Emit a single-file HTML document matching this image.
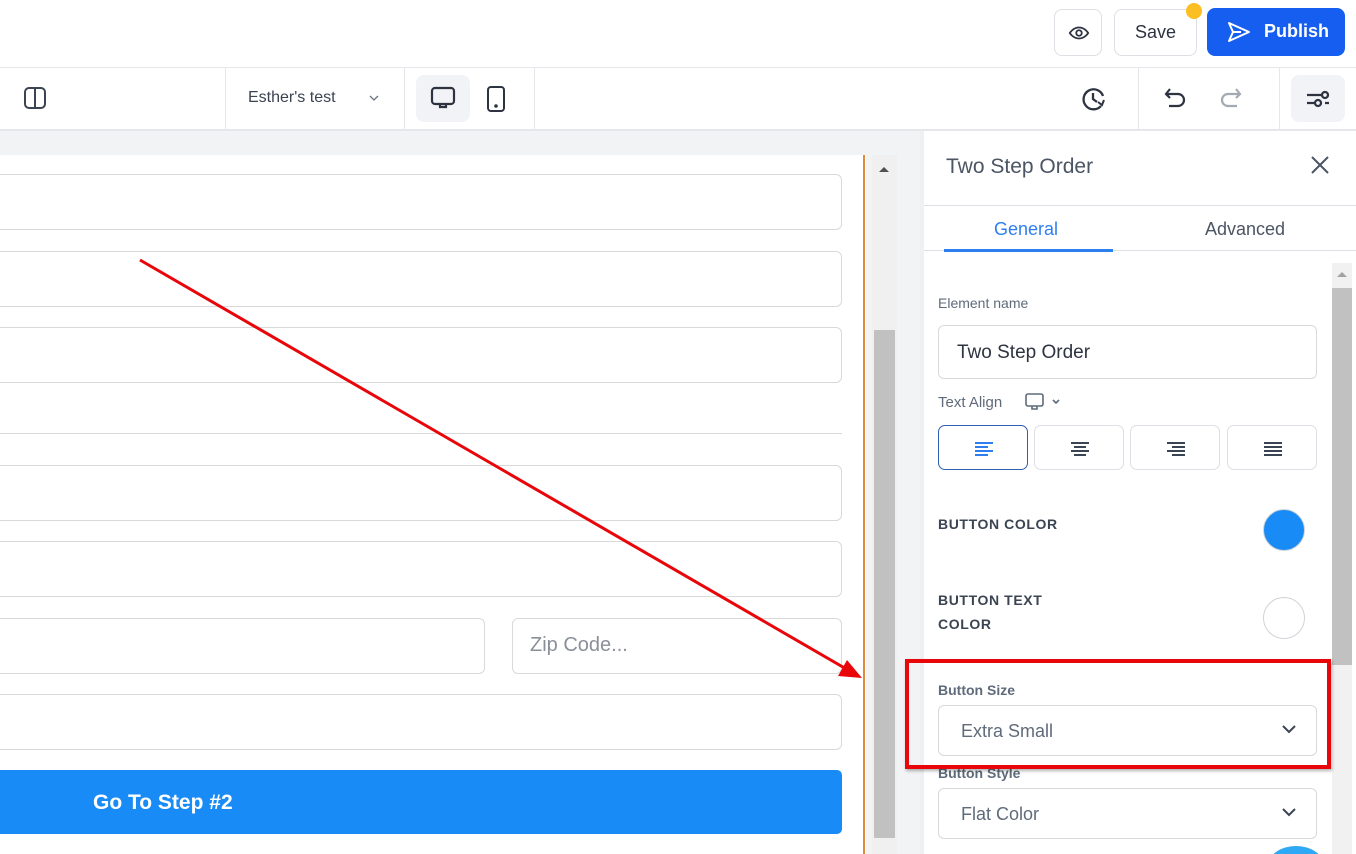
<!DOCTYPE html>
<html style="overflow:hidden;height:854px"><head><meta charset="utf-8"><style>
*{box-sizing:border-box;margin:0;padding:0}
html,body{overflow:hidden}
body{width:1356px;height:854px;overflow:hidden;background:#fff;font-family:"Liberation Sans",sans-serif;position:relative}
.a{position:absolute}
.inp{position:absolute;border:1px solid #d9d9d9;border-radius:6px;background:#fff}
.lbl{position:absolute;font-size:14px;color:#5f6b7a}
.cap{position:absolute;font-size:14px;font-weight:bold;color:#3b4452;letter-spacing:.6px;line-height:24px}
.ab{position:absolute;top:425px;width:90px;height:45px;border:1px solid #dcdfe3;border-radius:7px;background:#fff}
.ab svg{position:absolute;left:36px;top:14px}
</style></head><body>
<div class="a" style="left:0;top:67px;width:1356px;height:1px;background:#e5e7eb"></div>
<div class="a" style="left:1054px;top:9px;width:48px;height:47px;border:1px solid #dcdfe3;border-radius:8px">
<svg class="a" style="left:13px;top:12px" width="22" height="22" viewBox="0 0 24 24" fill="none" stroke="#2d3340" stroke-width="2"><path d="M2 12s3.5-6 10-6 10 6 10 6-3.5 6-10 6S2 12 2 12z"/><circle cx="12" cy="12" r="3"/></svg></div>
<div class="a" style="left:1114px;top:9px;width:83px;height:47px;border:1px solid #dcdfe3;border-radius:8px;font-size:18px;color:#2d3340;text-align:center;line-height:45px">Save</div>
<div class="a" style="left:1186px;top:3px;width:16px;height:16px;border-radius:50%;background:#fbbf24"></div>
<div class="a" style="left:1207px;top:8px;width:138px;height:48px;background:#155eef;border-radius:8px;color:#fff;font-weight:bold;font-size:18px;line-height:46px;padding-left:57px">Publish</div>
<svg class="a" style="left:1226px;top:20px" width="26" height="24" viewBox="0 0 26 24" fill="none" stroke="#fff" stroke-width="2" stroke-linejoin="round"><path d="M3 3l20 9-20 9 4-9z M7 12h8"/></svg>
<div class="a" style="left:0;top:129px;width:1356px;height:2px;background:#e5e7eb"></div>
<svg class="a" style="left:23px;top:86px" width="24" height="24" viewBox="0 0 24 24" fill="none" stroke="#3b4452" stroke-width="2"><rect x="2" y="2" width="20" height="20" rx="4"/><path d="M12 2v20"/></svg>
<div class="a" style="left:225px;top:68px;width:1px;height:61px;background:#e5e7eb"></div>
<div class="a" style="left:248px;top:89px;font-size:16px;color:#3b4452">Esther's test</div>
<svg class="a" style="left:368px;top:92px" width="12" height="12" viewBox="0 0 12 12" fill="none" stroke="#6b7280" stroke-width="1.3"><path d="M2 4l4 4 4-4"/></svg>
<div class="a" style="left:404px;top:68px;width:1px;height:61px;background:#e5e7eb"></div>
<div class="a" style="left:416px;top:75px;width:54px;height:47px;background:#f2f3f6;border-radius:8px"></div>
<svg class="a" style="left:429px;top:85px" width="28" height="26" viewBox="0 0 28 26" fill="none" stroke="#2d3340" stroke-width="2.2"><rect x="3" y="3" width="22" height="16" rx="3"/><path d="M11 19v3h6v-3"/></svg>
<svg class="a" style="left:485px;top:85px" width="22" height="28" viewBox="0 0 22 28" fill="none" stroke="#2d3340" stroke-width="2"><rect x="3" y="2" width="16" height="24" rx="3"/><circle cx="11" cy="21" r="0.8" fill="#2d3340"/></svg>
<div class="a" style="left:534px;top:68px;width:1px;height:61px;background:#e5e7eb"></div>
<svg class="a" style="left:1081px;top:86px" width="28" height="26" viewBox="0 0 28 26" fill="none" stroke="#2d3340" stroke-width="2.3"><path d="M22 10A10 10 0 1 0 20 20"/><path d="M12 7v6l4 3"/><path d="M23 14l-2 5-4-3" stroke-width="2"/></svg>
<div class="a" style="left:1138px;top:68px;width:1px;height:61px;background:#e5e7eb"></div>
<svg class="a" style="left:1163px;top:86px" width="26" height="24" viewBox="0 0 26 24" fill="none" stroke="#2d3340" stroke-width="2.2"><path d="M7 3L3 8l4 4M3 8h12a6 6 0 0 1 0 12H6"/></svg>
<svg class="a" style="left:1217px;top:86px" width="26" height="24" viewBox="0 0 26 24" fill="none" stroke="#a4aab3" stroke-width="2.2"><path d="M19 3l4 5-4 4M23 8H11a6 6 0 0 0 0 12h9"/></svg>
<div class="a" style="left:1279px;top:68px;width:1px;height:61px;background:#e5e7eb"></div>
<div class="a" style="left:1291px;top:75px;width:54px;height:47px;background:#f2f3f6;border-radius:8px"></div>
<svg class="a" style="left:1305px;top:87px" width="26" height="24" viewBox="0 0 26 24" fill="none" stroke="#2d3340" stroke-width="2.3"><path d="M2 8h14M20 16H24M2 16h8"/><circle cx="20" cy="8" r="3"/><circle cx="13" cy="16" r="3"/></svg>
<div class="a" style="left:0;top:131px;width:924px;height:723px;background:#f2f3f5"></div>
<div class="a" style="left:0;top:155px;width:866px;height:699px;background:#fff"></div>
<div class="a" style="left:863px;top:155px;width:2px;height:699px;background:#e08a3c"></div>
<div class="a" style="left:872px;top:155px;width:25px;height:699px;background:#f0f0f0"></div>
<svg class="a" style="left:878px;top:165px" width="12" height="8"><path d="M1 7L6 2l5 5z" fill="#505050"/></svg>
<div class="a" style="left:874px;top:330px;width:21px;height:508px;background:#c1c1c1"></div>
<div class="inp" style="left:-10px;top:174px;width:852px;height:56px"></div>
<div class="inp" style="left:-10px;top:251px;width:852px;height:56px"></div>
<div class="inp" style="left:-10px;top:327px;width:852px;height:56px"></div>
<div class="a" style="left:0;top:433px;width:842px;height:1px;background:#d9d9d9"></div>
<div class="inp" style="left:-10px;top:465px;width:852px;height:56px"></div>
<div class="inp" style="left:-10px;top:541px;width:852px;height:56px"></div>
<div class="inp" style="left:-10px;top:618px;width:495px;height:56px"></div>
<div class="inp" style="left:512px;top:618px;width:330px;height:56px;font-size:20px;color:#8a8f98;padding:15px 0 0 17px">Zip Code...</div>
<div class="inp" style="left:-10px;top:694px;width:852px;height:56px"></div>
<div class="a" style="left:-10px;top:770px;width:852px;height:64px;background:#188bf6;border-radius:5px;color:#fff;font-weight:bold;font-size:21px;line-height:66px;padding-left:103px">Go To Step #2</div>
<div class="a" style="left:920px;top:131px;width:4px;height:723px;background:#eef0f2"></div>
<div class="a" style="left:946px;top:155px;font-size:21px;color:#4b5563">Two Step Order</div>
<svg class="a" style="left:1309px;top:154px" width="22" height="22" viewBox="0 0 22 22" stroke="#4b5563" stroke-width="2"><path d="M3 3l16 16M19 3L3 19"/></svg>
<div class="a" style="left:924px;top:205px;width:432px;height:1px;background:#dde1e5"></div>
<div class="a" style="left:994px;top:219px;font-size:18px;color:#2d7ff0">General</div>
<div class="a" style="left:1205px;top:219px;font-size:18px;color:#4b5563">Advanced</div>
<div class="a" style="left:924px;top:250px;width:432px;height:1px;background:#dde1e5"></div>
<div class="a" style="left:944px;top:249px;width:169px;height:3px;background:#2d7ff0"></div>
<div class="a" style="left:1332px;top:263px;width:20px;height:591px;background:#f1f1f1"></div>
<svg class="a" style="left:1336px;top:270px" width="12" height="8"><path d="M1 7L6 2l5 5z" fill="#a3a3a3"/></svg>
<div class="a" style="left:1332px;top:288px;width:20px;height:377px;background:#c1c1c1"></div>
<div class="lbl" style="left:938px;top:295px">Element name</div>
<div class="inp" style="left:938px;top:325px;width:379px;height:54px;font-size:19px;color:#2d3340;padding:16px 0 0 18px">Two Step Order</div>
<div class="lbl" style="left:938px;top:394px;font-size:15px">Text Align</div>
<svg class="a" style="left:1024px;top:392px" width="40" height="20" viewBox="0 0 40 20" fill="none" stroke="#5f6b7a" stroke-width="1.6"><rect x="2" y="2" width="17" height="12" rx="2"/><path d="M8 14v3h5v-3M29 8l3 3 3-3"/></svg>
<div class="ab" style="left:938px;border-color:#2f5fb3"><svg width="18" height="16"><path d="M0 3h18M0 7h13M0 11h18M0 15h13" stroke="#2d7ff0" stroke-width="2"/></svg></div>
<div class="ab" style="left:1034px"><svg width="18" height="16"><path d="M0 3h18M3 7h12M0 11h18M3 15h12" stroke="#3b4452" stroke-width="2"/></svg></div>
<div class="ab" style="left:1130px"><svg width="18" height="16"><path d="M0 3h18M5 7h13M0 11h18M5 15h13" stroke="#3b4452" stroke-width="2"/></svg></div>
<div class="ab" style="left:1227px"><svg width="18" height="16"><path d="M0 3h18M0 7h18M0 11h18M0 15h18" stroke="#3b4452" stroke-width="2"/></svg></div>
<div class="cap" style="left:938px;top:512px">BUTTON COLOR</div>
<div class="a" style="left:1263px;top:509px;width:42px;height:42px;border-radius:50%;background:#188bf6;border:1px solid #cfd3d8"></div>
<div class="cap" style="left:938px;top:588px">BUTTON TEXT<br>COLOR</div>
<div class="a" style="left:1263px;top:597px;width:42px;height:42px;border-radius:50%;background:#fff;border:1px solid #cfd3d8"></div>
<div class="lbl" style="left:938px;top:682px;font-weight:bold;font-size:14px">Button Size</div>
<div class="inp" style="left:938px;top:705px;width:379px;height:51px;font-size:18px;color:#5f6b7a;padding:15px 0 0 22px">Extra Small</div>
<svg class="a" style="left:1282px;top:724px" width="14" height="10"><path d="M1 2l6 6 6-6" stroke="#3b4452" stroke-width="2" fill="none"/></svg>
<div class="lbl" style="left:938px;top:765px;font-weight:bold;font-size:14px">Button Style</div>
<div class="inp" style="left:938px;top:788px;width:379px;height:51px;font-size:18px;color:#5f6b7a;padding:15px 0 0 22px">Flat Color</div>
<svg class="a" style="left:1282px;top:807px" width="14" height="10"><path d="M1 2l6 6 6-6" stroke="#3b4452" stroke-width="2" fill="none"/></svg>
<div class="a" style="left:1268px;top:846px;width:56px;height:8px;overflow:hidden"><div style="width:56px;height:40px;border-radius:50%;background:#2fa8f5"></div></div>
<div class="a" style="left:905px;top:659px;width:426px;height:110px;border:4px solid #e8060a;box-shadow:1px 2px 3px rgba(0,0,0,.3)"></div>
<svg class="a" style="left:0;top:0" width="1356" height="854"><line x1="140" y1="260" x2="848" y2="670" stroke="#e8060a" stroke-width="3"/><path d="M862 678L838 676L847 660Z" fill="#e8060a"/></svg>
</body></html>
